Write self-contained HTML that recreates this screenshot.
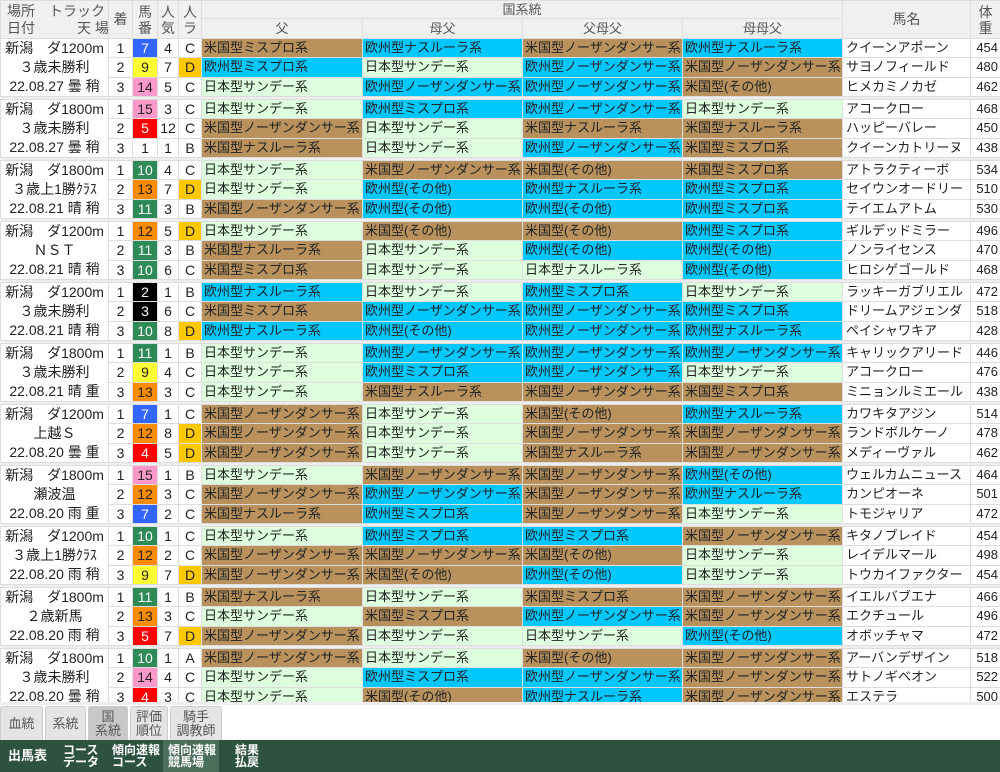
<!DOCTYPE html>
<html><head><meta charset="utf-8"><style>
*{margin:0;padding:0;box-sizing:border-box}
body{width:1000px;height:772px;background:#fff;font-family:"Liberation Sans","Noto Sans CJK JP",sans-serif;color:#222;overflow:hidden;position:relative}
table{border-collapse:collapse;table-layout:fixed;width:1000px;position:absolute;top:0;left:0}
td,th{border:1px solid #ddd;height:18px;line-height:16px;font-size:13px;white-space:nowrap;overflow:hidden;padding:0;font-weight:normal}
th{background:#f0f0f0;color:#555;font-size:13px;line-height:15px}
.inf{background:#fff;text-align:center;font-size:14px;line-height:19px;vertical-align:top;padding-top:0}
.c{text-align:center;font-size:14px}
.a{background:#b8915c;padding-left:2px}
.e{background:#00c8ff;padding-left:2px}
.j{background:#ddffdd;padding-left:2px}
.n{padding-left:3px}
.w{text-align:right;padding-right:2px}
.sep td{height:3px;background:#eee;border:none;line-height:0;font-size:0}
.h1{background:#3366ff;color:#fff}.h5{background:#ffff33}.h8{background:#ff99cc}.h3{background:#ff0000;color:#fff}
.h6{background:#2e8b57;color:#fff}.h7{background:#ff8c00}.h2{background:#000;color:#fff}.h0{background:#fff}
.D{background:#ffc800}
.tabs{position:absolute;top:702px;left:0;width:1000px;height:37px;background:#fff}
.tab{position:absolute;top:1px;height:35px;background:#e4e4e4;border:1px solid #ccc;border-radius:3px 3px 0 0;color:#555;font-size:13px;line-height:14px;text-align:center;display:flex;align-items:center;justify-content:center}
.bar{position:absolute;top:740px;left:0;width:1000px;height:32px;background:#2d5240;color:#fff}
.bi{position:absolute;top:0;height:32px;font-size:12px;line-height:12px;font-weight:bold;display:flex;align-items:center}
</style></head><body>
<table>
<colgroup><col style="width:108px"><col style="width:24px"><col style="width:25px"><col style="width:21px"><col style="width:23px"><col style="width:161px"><col style="width:160px"><col style="width:160px"><col style="width:160px"><col style="width:128px"><col style="width:30px"></colgroup>
<tr><th rowspan=2 style="height:38px;text-align:left;padding-left:6px;font-size:14px;line-height:17px">場所　トラック<br>日付　　　天 場</th><th rowspan=2 style="font-size:14px">着</th><th rowspan=2 style="font-size:14px;line-height:16px">馬<br>番</th><th rowspan=2 style="font-size:14px;line-height:16px">人<br>気</th><th rowspan=2 style="font-size:14px;line-height:16px">人<br>ラ</th><th colspan=4 style="height:18px">国系統</th><th rowspan=2 style="font-size:14px">馬名</th><th rowspan=2 style="font-size:14px;line-height:16px">体<br>重</th></tr>
<tr><th style="height:19px">父</th><th>母父</th><th>父母父</th><th>母母父</th></tr>

<tr><td rowspan=3 class=inf>新潟　ダ1200m<br>３歳未勝利<br>22.08.27 曇 稍</td><td class=c>1</td><td class="c h1">7</td><td class=c>4</td><td class=c>C</td><td class=a>米国型ミスプロ系</td><td class=e>欧州型ナスルーラ系</td><td class=a>米国型ノーザンダンサー系</td><td class=e>欧州型ナスルーラ系</td><td class=n>クイーンアポーン</td><td class=w>454</td></tr>
<tr><td class=c>2</td><td class="c h5">9</td><td class=c>7</td><td class="c D">D</td><td class=e>欧州型ミスプロ系</td><td class=j>日本型サンデー系</td><td class=e>欧州型ノーザンダンサー系</td><td class=a>米国型ノーザンダンサー系</td><td class=n>サヨノフィールド</td><td class=w>480</td></tr>
<tr><td class=c>3</td><td class="c h8">14</td><td class=c>5</td><td class=c>C</td><td class=j>日本型サンデー系</td><td class=e>欧州型ノーザンダンサー系</td><td class=e>欧州型ノーザンダンサー系</td><td class=a>米国型(その他)</td><td class=n>ヒメカミノカゼ</td><td class=w>462</td></tr>
<tr class=sep><td colspan=11></td></tr>

<tr><td rowspan=3 class=inf>新潟　ダ1800m<br>３歳未勝利<br>22.08.27 曇 稍</td><td class=c>1</td><td class="c h8">15</td><td class=c>3</td><td class=c>C</td><td class=j>日本型サンデー系</td><td class=e>欧州型ミスプロ系</td><td class=e>欧州型ノーザンダンサー系</td><td class=j>日本型サンデー系</td><td class=n>アコークロー</td><td class=w>468</td></tr>
<tr><td class=c>2</td><td class="c h3">5</td><td class=c>12</td><td class=c>C</td><td class=a>米国型ノーザンダンサー系</td><td class=j>日本型サンデー系</td><td class=a>米国型ナスルーラ系</td><td class=a>米国型ナスルーラ系</td><td class=n>ハッピーバレー</td><td class=w>450</td></tr>
<tr><td class=c>3</td><td class="c h0">1</td><td class=c>1</td><td class=c>B</td><td class=a>米国型ナスルーラ系</td><td class=j>日本型サンデー系</td><td class=e>欧州型ノーザンダンサー系</td><td class=a>米国型ミスプロ系</td><td class=n>クイーンカトリーヌ</td><td class=w>438</td></tr>
<tr class=sep><td colspan=11></td></tr>

<tr><td rowspan=3 class=inf>新潟　ダ1800m<br>３歳上1勝ｸﾗｽ<br>22.08.21 晴 稍</td><td class=c>1</td><td class="c h6">10</td><td class=c>4</td><td class=c>C</td><td class=j>日本型サンデー系</td><td class=a>米国型ノーザンダンサー系</td><td class=a>米国型(その他)</td><td class=a>米国型ミスプロ系</td><td class=n>アトラクティーボ</td><td class=w>534</td></tr>
<tr><td class=c>2</td><td class="c h7">13</td><td class=c>7</td><td class="c D">D</td><td class=j>日本型サンデー系</td><td class=e>欧州型(その他)</td><td class=e>欧州型ナスルーラ系</td><td class=e>欧州型ミスプロ系</td><td class=n>セイウンオードリー</td><td class=w>510</td></tr>
<tr><td class=c>3</td><td class="c h6">11</td><td class=c>3</td><td class=c>B</td><td class=a>米国型ノーザンダンサー系</td><td class=e>欧州型(その他)</td><td class=e>欧州型(その他)</td><td class=e>欧州型ミスプロ系</td><td class=n>テイエムアトム</td><td class=w>530</td></tr>
<tr class=sep><td colspan=11></td></tr>

<tr><td rowspan=3 class=inf>新潟　ダ1200m<br>ＮＳＴ<br>22.08.21 晴 稍</td><td class=c>1</td><td class="c h7">12</td><td class=c>5</td><td class="c D">D</td><td class=j>日本型サンデー系</td><td class=a>米国型(その他)</td><td class=a>米国型(その他)</td><td class=e>欧州型ミスプロ系</td><td class=n>ギルデッドミラー</td><td class=w>496</td></tr>
<tr><td class=c>2</td><td class="c h6">11</td><td class=c>3</td><td class=c>B</td><td class=a>米国型ナスルーラ系</td><td class=j>日本型サンデー系</td><td class=e>欧州型(その他)</td><td class=e>欧州型(その他)</td><td class=n>ノンライセンス</td><td class=w>470</td></tr>
<tr><td class=c>3</td><td class="c h6">10</td><td class=c>6</td><td class=c>C</td><td class=a>米国型ミスプロ系</td><td class=j>日本型サンデー系</td><td class=j>日本型ナスルーラ系</td><td class=e>欧州型(その他)</td><td class=n>ヒロシゲゴールド</td><td class=w>468</td></tr>
<tr class=sep><td colspan=11></td></tr>

<tr><td rowspan=3 class=inf>新潟　ダ1200m<br>３歳未勝利<br>22.08.21 晴 稍</td><td class=c>1</td><td class="c h2">2</td><td class=c>1</td><td class=c>B</td><td class=e>欧州型ナスルーラ系</td><td class=j>日本型サンデー系</td><td class=e>欧州型ミスプロ系</td><td class=j>日本型サンデー系</td><td class=n>ラッキーガブリエル</td><td class=w>472</td></tr>
<tr><td class=c>2</td><td class="c h2">3</td><td class=c>6</td><td class=c>C</td><td class=a>米国型ミスプロ系</td><td class=e>欧州型ノーザンダンサー系</td><td class=e>欧州型ノーザンダンサー系</td><td class=e>欧州型ミスプロ系</td><td class=n>ドリームアジェンダ</td><td class=w>518</td></tr>
<tr><td class=c>3</td><td class="c h6">10</td><td class=c>8</td><td class="c D">D</td><td class=e>欧州型ナスルーラ系</td><td class=e>欧州型(その他)</td><td class=e>欧州型ノーザンダンサー系</td><td class=e>欧州型ナスルーラ系</td><td class=n>ペイシャワキア</td><td class=w>428</td></tr>
<tr class=sep><td colspan=11></td></tr>

<tr><td rowspan=3 class=inf>新潟　ダ1800m<br>３歳未勝利<br>22.08.21 晴 重</td><td class=c>1</td><td class="c h6">11</td><td class=c>1</td><td class=c>B</td><td class=j>日本型サンデー系</td><td class=e>欧州型ノーザンダンサー系</td><td class=e>欧州型ノーザンダンサー系</td><td class=e>欧州型ノーザンダンサー系</td><td class=n>キャリックアリード</td><td class=w>446</td></tr>
<tr><td class=c>2</td><td class="c h5">9</td><td class=c>4</td><td class=c>C</td><td class=j>日本型サンデー系</td><td class=e>欧州型ミスプロ系</td><td class=e>欧州型ノーザンダンサー系</td><td class=j>日本型サンデー系</td><td class=n>アコークロー</td><td class=w>476</td></tr>
<tr><td class=c>3</td><td class="c h7">13</td><td class=c>3</td><td class=c>C</td><td class=j>日本型サンデー系</td><td class=a>米国型ナスルーラ系</td><td class=a>米国型ノーザンダンサー系</td><td class=a>米国型ミスプロ系</td><td class=n>ミニョンルミエール</td><td class=w>438</td></tr>
<tr class=sep><td colspan=11></td></tr>

<tr><td rowspan=3 class=inf>新潟　ダ1200m<br>上越Ｓ<br>22.08.20 曇 重</td><td class=c>1</td><td class="c h1">7</td><td class=c>1</td><td class=c>C</td><td class=a>米国型ノーザンダンサー系</td><td class=j>日本型サンデー系</td><td class=a>米国型(その他)</td><td class=e>欧州型ナスルーラ系</td><td class=n>カワキタアジン</td><td class=w>514</td></tr>
<tr><td class=c>2</td><td class="c h7">12</td><td class=c>8</td><td class="c D">D</td><td class=a>米国型ノーザンダンサー系</td><td class=j>日本型サンデー系</td><td class=a>米国型ノーザンダンサー系</td><td class=a>米国型ノーザンダンサー系</td><td class=n>ランドボルケーノ</td><td class=w>478</td></tr>
<tr><td class=c>3</td><td class="c h3">4</td><td class=c>5</td><td class="c D">D</td><td class=a>米国型ノーザンダンサー系</td><td class=j>日本型サンデー系</td><td class=a>米国型ナスルーラ系</td><td class=a>米国型ノーザンダンサー系</td><td class=n>メディーヴァル</td><td class=w>462</td></tr>
<tr class=sep><td colspan=11></td></tr>

<tr><td rowspan=3 class=inf>新潟　ダ1800m<br>瀬波温<br>22.08.20 雨 重</td><td class=c>1</td><td class="c h8">15</td><td class=c>1</td><td class=c>B</td><td class=j>日本型サンデー系</td><td class=a>米国型ノーザンダンサー系</td><td class=a>米国型ノーザンダンサー系</td><td class=e>欧州型(その他)</td><td class=n>ウェルカムニュース</td><td class=w>464</td></tr>
<tr><td class=c>2</td><td class="c h7">12</td><td class=c>3</td><td class=c>C</td><td class=a>米国型ノーザンダンサー系</td><td class=e>欧州型ノーザンダンサー系</td><td class=a>米国型ノーザンダンサー系</td><td class=e>欧州型ナスルーラ系</td><td class=n>カンピオーネ</td><td class=w>501</td></tr>
<tr><td class=c>3</td><td class="c h1">7</td><td class=c>2</td><td class=c>C</td><td class=a>米国型ナスルーラ系</td><td class=e>欧州型ミスプロ系</td><td class=a>米国型ノーザンダンサー系</td><td class=j>日本型サンデー系</td><td class=n>トモジャリア</td><td class=w>472</td></tr>
<tr class=sep><td colspan=11></td></tr>

<tr><td rowspan=3 class=inf>新潟　ダ1200m<br>３歳上1勝ｸﾗｽ<br>22.08.20 雨 稍</td><td class=c>1</td><td class="c h6">10</td><td class=c>1</td><td class=c>C</td><td class=j>日本型サンデー系</td><td class=e>欧州型ミスプロ系</td><td class=e>欧州型ミスプロ系</td><td class=a>米国型ノーザンダンサー系</td><td class=n>キタノブレイド</td><td class=w>454</td></tr>
<tr><td class=c>2</td><td class="c h7">12</td><td class=c>2</td><td class=c>C</td><td class=a>米国型ノーザンダンサー系</td><td class=a>米国型ノーザンダンサー系</td><td class=a>米国型(その他)</td><td class=j>日本型サンデー系</td><td class=n>レイデルマール</td><td class=w>498</td></tr>
<tr><td class=c>3</td><td class="c h5">9</td><td class=c>7</td><td class="c D">D</td><td class=a>米国型ノーザンダンサー系</td><td class=a>米国型(その他)</td><td class=e>欧州型(その他)</td><td class=j>日本型サンデー系</td><td class=n>トウカイファクター</td><td class=w>454</td></tr>
<tr class=sep><td colspan=11></td></tr>

<tr><td rowspan=3 class=inf>新潟　ダ1800m<br>２歳新馬<br>22.08.20 雨 稍</td><td class=c>1</td><td class="c h6">11</td><td class=c>1</td><td class=c>B</td><td class=a>米国型ナスルーラ系</td><td class=j>日本型サンデー系</td><td class=a>米国型ミスプロ系</td><td class=a>米国型ノーザンダンサー系</td><td class=n>イエルバブエナ</td><td class=w>466</td></tr>
<tr><td class=c>2</td><td class="c h7">13</td><td class=c>3</td><td class=c>C</td><td class=j>日本型サンデー系</td><td class=a>米国型ミスプロ系</td><td class=e>欧州型ノーザンダンサー系</td><td class=a>米国型ノーザンダンサー系</td><td class=n>エクチュール</td><td class=w>496</td></tr>
<tr><td class=c>3</td><td class="c h3">5</td><td class=c>7</td><td class="c D">D</td><td class=a>米国型ノーザンダンサー系</td><td class=j>日本型サンデー系</td><td class=j>日本型サンデー系</td><td class=e>欧州型(その他)</td><td class=n>オボッチャマ</td><td class=w>472</td></tr>
<tr class=sep><td colspan=11></td></tr>

<tr><td rowspan=3 class=inf>新潟　ダ1800m<br>３歳未勝利<br>22.08.20 曇 稍</td><td class=c>1</td><td class="c h6">10</td><td class=c>1</td><td class=c>A</td><td class=a>米国型ノーザンダンサー系</td><td class=j>日本型サンデー系</td><td class=a>米国型(その他)</td><td class=a>米国型ノーザンダンサー系</td><td class=n>アーバンデザイン</td><td class=w>518</td></tr>
<tr><td class=c>2</td><td class="c h8">14</td><td class=c>4</td><td class=c>C</td><td class=j>日本型サンデー系</td><td class=e>欧州型ミスプロ系</td><td class=e>欧州型ノーザンダンサー系</td><td class=a>米国型ノーザンダンサー系</td><td class=n>サトノギベオン</td><td class=w>522</td></tr>
<tr><td class=c>3</td><td class="c h3">4</td><td class=c>3</td><td class=c>C</td><td class=j>日本型サンデー系</td><td class=a>米国型(その他)</td><td class=e>欧州型ナスルーラ系</td><td class=a>米国型ノーザンダンサー系</td><td class=n>エステラ</td><td class=w>500</td></tr>
<tr class=sep><td colspan=11></td></tr>
</table>

<div class="tabs" style="background:#fff;border-top:3px solid #eee">
<div class="tab" style="left:0;width:43px">血統</div>
<div class="tab" style="left:45px;width:41px">系統</div>
<div class="tab" style="left:88px;width:40px;background:#c8c8c8">国<br>系統</div>
<div class="tab" style="left:130px;width:38px">評価<br>順位</div>
<div class="tab" style="left:170px;width:52px">騎手<br>調教師</div>
</div>
<div class="bar">
<div class="bi" style="left:8px;font-size:13px">出馬表</div>
<div class="bi" style="left:63px">コース<br>データ</div>
<div class="bi" style="left:112px">傾向速報<br>コース</div>
<div class="bi" style="left:163px;width:56px;padding-left:5px;background:#4a6e5a">傾向速報<br>競馬場</div>
<div class="bi" style="left:235px">結果<br>払戻</div>
</div>
</body></html>
